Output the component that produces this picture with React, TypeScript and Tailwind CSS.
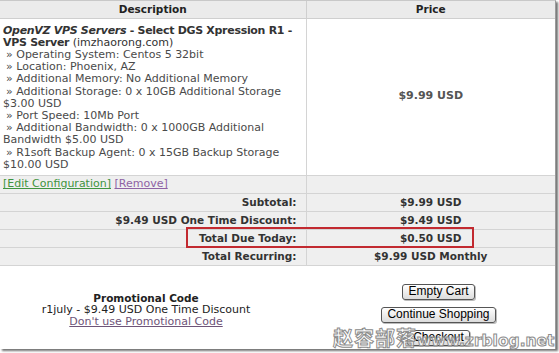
const font = { fontFamily: '"DejaVu Sans", Verdana, sans-serif' };

const options = [
  ['» Operating System: Centos 5 32bit'],
  ['» Location: Phoenix, AZ'],
  ['» Additional Memory: No Additional Memory'],
  ['» Additional Storage: 0 x 10GB Additional Storage', '$3.00 USD'],
  ['» Port Speed: 10Mb Port'],
  ['» Additional Bandwidth: 0 x 1000GB Additional', 'Bandwidth $5.00 USD'],
  ['» R1soft Backup Agent: 0 x 15GB Backup Storage', '$10.00 USD'],
];

const totals = [
  ['Subtotal:', '$9.99 USD'],
  ['$9.49 USD One Time Discount:', '$9.49 USD'],
  ['Total Due Today:', '$0.50 USD'],
  ['Total Recurring:', '$9.99 USD Monthly'],
];

export default function App() {
  return (
    <div className="w-[559px] h-[353px] bg-white overflow-hidden">
      <div
        className="relative w-[556px] h-[349px] bg-white border-t border-[#c8c8c8] border-r border-r-[#9a9a9a] shadow-[2px_2px_2px_rgba(0,0,0,0.55)] text-[10.5px] text-[#444]"
        style={font}
      >
        <table className="w-full border-collapse table-fixed">
          <colgroup>
            <col className="w-[306px]" />
            <col />
          </colgroup>
          <thead>
            <tr className="h-[17px] bg-[#ebebeb]">
              <th className="border-b border-r border-[#cfcfcf] font-bold text-[#222] leading-[16px]">
                Description
              </th>
              <th className="border-b border-[#cfcfcf] font-bold text-[#222] leading-[16px]">Price</th>
            </tr>
          </thead>
          <tbody>
            <tr className="h-[157px]">
              <td className="align-top border-r border-b border-[#d4d4d4] pl-[3px] pt-[6px] leading-[12.2px] text-[11px] text-[#4a4a4a]">
                <div className="whitespace-nowrap text-[#333] tracking-[-0.3px]">
                  <span className="italic font-bold">OpenVZ VPS Servers</span>
                  <span className="font-bold"> - Select DGS Xpression R1 -</span>
                </div>
                <div className="whitespace-nowrap text-[#333]">
                  <span className="font-bold tracking-[-0.3px]">VPS Server</span> (imzhaorong.com)
                </div>
                {options.map((lines, i) => (
                  <div key={i} className="whitespace-nowrap">
                    <div className="pl-[3px]">{lines[0]}</div>
                    {lines[1] && <div>{lines[1]}</div>}
                  </div>
                ))}
              </td>
              <td className="border-b border-[#d4d4d4] text-center align-middle font-bold text-[#555] text-[11px]">
                $9.99 USD
              </td>
            </tr>
            <tr className="h-[18px] bg-[#efefef]">
              <td className="border-r border-b border-[#d4d4d4] pl-[3px] leading-[16px] text-[11px]">
                <a className="text-[#3f9440] underline">[Edit Configuration]</a>{' '}
                <a className="text-[#8e62a4] underline">[Remove]</a>
              </td>
              <td className="border-b border-[#d4d4d4]" />
            </tr>
            {totals.map(([label, value]) => (
              <tr key={label} className="h-[18px] bg-[#efefef]">
                <td className="border-r border-b border-[#d4d4d4] text-right pr-[9px] font-bold text-[#333] leading-[16px]">
                  {label}
                </td>
                <td className="border-b border-[#d4d4d4] text-center font-bold text-[#333] leading-[16px]">
                  {value}
                </td>
              </tr>
            ))}
          </tbody>
        </table>

        <div className="flex items-start h-[84px]">
          <div className="w-[292px] text-center leading-[12px] text-[#222] text-[11px] pt-[26px]">
            <div className="font-bold text-[10.5px]">Promotional Code</div>
            <div>r1july - $9.49 USD One Time Discount</div>
            <a className="text-[#6e5478] underline">Don't use Promotional Code</a>
          </div>
          <div
            className="flex-1 flex flex-col items-center gap-[7px] pl-[30px] pt-[18px] text-[12px] text-black"
            style={{ fontFamily: '"Liberation Sans", Arial, sans-serif' }}
          >
            {['Empty Cart', 'Continue Shopping', 'Checkout'].map((b) => (
              <button
                key={b}
                className="h-[16px] px-[5px] leading-[13px] border border-[#555] rounded-[3px] bg-gradient-to-b from-white to-[#dcdcdc] shadow-[1px_1px_0_#bbb]"
              >
                {b}
              </button>
            ))}
          </div>
        </div>

        {/* highlight round the total due */}
        <div className="absolute left-[186px] top-[226px] w-[288px] h-[21px] border-2 border-[#c22a30]" />

        {/* watermark */}
        <div className="absolute left-[333px] top-[326px] whitespace-nowrap font-bold text-white/60 [-webkit-text-stroke:1px_#8c8c8c] leading-[22px]">
          <span
            className="text-[20px] tracking-[1px]"
            style={{ fontFamily: '"Noto Sans CJK SC", sans-serif' }}
          >
            赵容部落
          </span>
          <span className="text-[15.5px] tracking-[0px]" style={{ fontFamily: '"DejaVu Sans", sans-serif' }}>
            www.zrblog.net
          </span>
        </div>
      </div>
    </div>
  );
}
